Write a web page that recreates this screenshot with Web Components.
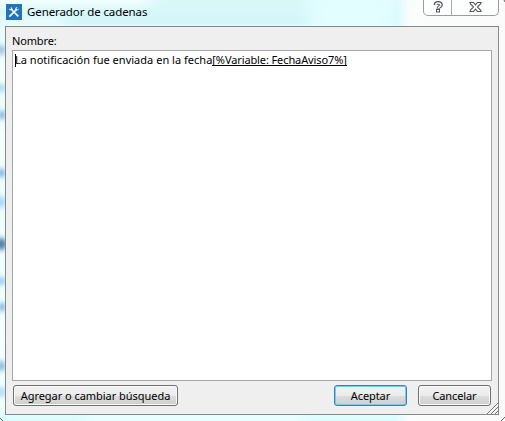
<!DOCTYPE html>
<html lang="es"><head><meta charset="utf-8"><title>Generador de cadenas</title>
<style>html,body{margin:0;width:505px;height:421px;overflow:hidden}body{font:11px/15px "Noto Sans","Open Sans",sans-serif;color:#000}</style></head>
<body>
<dialog-window><title-bar slot="title">Generador de cadenas</title-bar>
<string-editor label="Nombre:">La notificación fue enviada en la fecha<variable-token slot="token">[%Variable: FechaAviso7%]</variable-token></string-editor>
<button-row slot="footer"><push-button style="width:165px;letter-spacing:-.04px">Agregar o cambiar búsqueda</push-button><push-button class="end" primary style="width:73px;letter-spacing:-.1px">Aceptar</push-button><push-button style="width:73px;letter-spacing:-.1px">Cancelar</push-button></button-row>
</dialog-window>
<script>
const define=(name,html)=>customElements.define(name,class extends HTMLElement{
 constructor(){super();this.attachShadow({mode:'open'}).innerHTML=html;}
 connectedCallback(){const l=this.shadowRoot.querySelector('[data-label]');if(l)l.textContent=this.getAttribute('label');}
});
define('dialog-window',`<style>
:host{display:flex;flex-direction:column;position:relative;box-sizing:border-box;width:505px;height:421px;padding:0 6px 6px 5px;overflow:hidden;
background:linear-gradient(90deg,transparent 395px,#fbfdfd 410px,#fafafa),linear-gradient(#daf8fa 0,#d3f5f8 23px,#e9fcfc 27px,#f0ffff 405px,#d9fbfd 421px)}
.edge{position:absolute;left:0;top:0;width:505px;height:421px;pointer-events:none}
.client{position:relative;flex:1;box-sizing:border-box;border:1px solid #858989;background:#efefef;padding:0 6px;display:flex;flex-direction:column}
.grip{position:absolute;right:0;bottom:0}
::slotted(title-bar){position:relative}
</style>
<svg class="edge" viewBox="0 0 505 421"><defs><filter id="b" x="-100%" y="-100%" width="300%" height="300%"><feGaussianBlur stdDeviation="2 2.5"/></filter><filter id="s" x="-20%" y="-100%" width="140%" height="300%"><feGaussianBlur stdDeviation="8 4"/></filter></defs>
<g filter="url(#s)"><rect x="-10" y="-8" width="160" height="14" fill="#f3ffff"/><rect x="-5" y="18" width="70" height="8" fill="#f1fefe"/><rect x="310" y="-5" width="85" height="35" fill="#e2feff"/><rect x="85" y="416" width="220" height="8" fill="#f2ffff"/><rect x="-4" y="60" width="10" height="30" fill="#fff"/><rect x="-4" y="130" width="10" height="30" fill="#fff"/><rect x="-4" y="320" width="10" height="34" fill="#fff"/></g>
<g filter="url(#b)"><ellipse cx="1" cy="50" rx="5" ry="5" fill="#a3c6e1"/><ellipse cx="1" cy="88" rx="5" ry="4" fill="#aad7f4"/><ellipse cx="2" cy="115" rx="4" ry="4" fill="#89b4df"/><ellipse cx="1" cy="173" rx="5" ry="4" fill="#83b4e0"/><ellipse cx="1" cy="202" rx="5" ry="6" fill="#aad9fa"/><ellipse cx="1" cy="244" rx="6" ry="6" fill="#557fac"/><ellipse cx="1" cy="281" rx="5" ry="4" fill="#9accf1"/><ellipse cx="2" cy="307" rx="4" ry="4" fill="#88b4dd"/><ellipse cx="1" cy="366" rx="5" ry="5" fill="#91bce1"/><ellipse cx="1" cy="392" rx="5" ry="5" fill="#b1ddfa"/></g>
<path d="M501 421L505 417M0 418l3 3M504 0l1 2" fill="none" stroke="#666"/></svg>
<slot name="title"></slot><div class="client"><slot></slot><slot name="footer"></slot>
<svg class="grip" width="12" height="12"><path d="M1 12L12 1M5 12L12 5M9 12L12 9" stroke="#777" fill="none"/><path d="M2.5 12L12 2.5M6.5 12L12 6.5M10.5 12L12 10.5" stroke="#fff" fill="none"/></svg></div>`);
define('title-bar',`<style>
:host{display:flex;height:26px;box-sizing:border-box;padding-left:1px;font-size:11.5px;letter-spacing:-.1px}
.logo{margin-top:4px}.title{margin:4px 0 0 5px;line-height:16px;white-space:nowrap}
.controls{margin-left:auto;height:16px;width:76px;box-sizing:border-box;border:1px solid #9a9da0;border-top:0;border-radius:0 0 5px 5px;display:flex;background:#fdfefe}
.controls svg:first-child{border-right:1px solid #aaa}
</style>
<svg class="logo" width="16" height="16" viewBox="0 0 16 16"><rect width="16" height="16" fill="#2473b9"/><path d="M5 5L12.3 12.3M3.3 12.7L10.7 5.3" stroke="#f4faff" stroke-width="1.7"/><path d="M3 4.5Q3.2 6.6 5.5 6.3L6.4 5.3Q6.7 3 4.4 2.9L5.3 4.3L4.4 5.2Z" fill="#fff"/><path d="M13 4.3L11.5 5.7L10.3 4.6L11.7 3Q8.8 3.1 9.4 6.2Q12.9 7.2 13 4.3Z" fill="#fff"/></svg>
<span class="title"><slot></slot></span>
<div class="controls"><svg width="27" height="15"><path d="M11.5 5Q11.5 2.8 14 2.8Q17 2.8 17 5Q17 6.3 15 7.2Q14.4 7.6 14.4 8.7" fill="none" stroke="#53565f" stroke-width="3.6"/><path d="M11.8 5Q11.8 2.9 14 2.9Q16.8 2.9 16.8 5Q16.8 6.2 15 7.1Q14.2 7.6 14.3 8.4" fill="none" stroke="#fff" stroke-width="1.5"/><rect x="12.5" y="9.5" width="3" height="2.5" fill="#fff" stroke="#53565f"/></svg>
<svg width="46" height="15"><path d="M18 2.5H21.5L23.5 4.8L25.5 2.5H29L28.5 4L25.5 7L28.5 10L29 11.5H25.5L23.5 9.2L21.5 11.5H18L18.5 10L21.5 7L18.5 4Z" fill="#fff" stroke="#53565f" stroke-width="1.1"/></svg></div>`);
define('string-editor',`<style>
:host{display:flex;flex-direction:column;flex:none;height:354px;letter-spacing:.02px}
label{height:23px;box-sizing:border-box;padding-top:6px;line-height:15px;font-size:11px;letter-spacing:-.15px}
.field{flex:1;border:1px solid #a5a8aa;background:#fff;padding:1px 2px;white-space:nowrap;position:relative}
.caret{position:absolute;left:2px;top:3px;width:1px;height:13px;background:#000}
</style><label data-label></label><div class="field"><i class="caret"></i><slot></slot><slot name="token"></slot></div>`);
define('variable-token',`<style>:host{display:inline-block;height:14px;line-height:15px;border-bottom:1px solid #000;box-sizing:border-box;vertical-align:top;letter-spacing:-.11px}</style><slot></slot>`);
define('button-row',`<style>:host{display:flex;gap:11px;padding:4px 1px 0}::slotted(.end){margin-left:auto}</style><slot></slot>`);
define('push-button',`<style>:host{display:block;flex:none}
button{display:block;width:100%;height:21px;padding:0;box-sizing:border-box;border:1px solid #707070;border-radius:3px;box-shadow:inset 0 0 0 1px #fafafa;background:linear-gradient(#f2f2f2 0,#ebebeb 50%,#dddddd 51%,#cfcfcf);font:inherit;letter-spacing:inherit;color:#000;line-height:19px;white-space:nowrap}
:host([primary]) button{border-color:#3c7fb1;box-shadow:inset 0 0 0 1px #73cbed}
</style><button><slot></slot></button>`);
</script></body></html>
